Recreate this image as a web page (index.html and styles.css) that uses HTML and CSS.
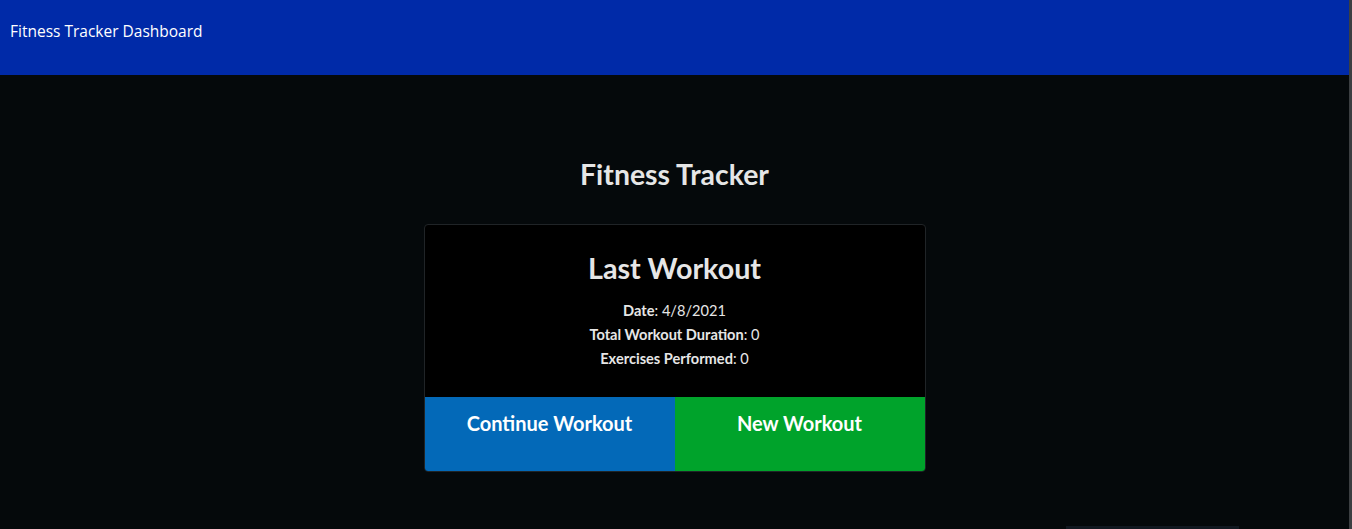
FILE: index.html
```html
<!DOCTYPE html>
<html>
<head>
<meta charset="utf-8">
<link rel="stylesheet" href="styles.css">
</head>
<body>
<div class="page">
  <header class="topbar"><span class="brand">Fitness Tracker Dashboard</span></header>
  <main class="main">
    <h2 class="title">Fitness Tracker</h2>
    <section class="card">
      <div class="card-body">
        <h3 class="card-title">Last Workout</h3>
        <p class="info"><b>Date</b>: 4/8/2021</p>
        <p class="info"><b>Total Workout Duration</b>: 0</p>
        <p class="info"><b>Exercises Performed</b>: 0</p>
      </div>
      <div class="actions">
        <a class="btn btn-continue">Continue Workout</a>
        <a class="btn btn-new">New Workout</a>
      </div>
    </section>
    <div class="bottom-row"><div class="stub"></div></div>
  </main>
</div>
</body>
</html>
```
FILE: styles.css
```css
html, body { margin: 0; padding: 0; }
body {
  background: #05090b;
  color: #e6e6e6;
  font-family: Lato, "Noto Sans", sans-serif;
  overflow: hidden;
}
.page {
  height: 529px;
  box-sizing: border-box;
  display: flex;
  flex-direction: column;
  border-right: 3px solid #3c3f42;
  width: 1352px;
}
.topbar {
  height: 75px;
  background: #002aa8;
  display: flex;
  align-items: flex-start;
  padding: 20px 10px 0;
  box-sizing: border-box;
}
.brand {
  font-family: "Open Sans", "Noto Sans", sans-serif;
  font-size: 15.5px;
  color: #ffffff;
  line-height: 22px;
}
.main {
  flex: 1;
  display: flex;
  flex-direction: column;
  align-items: center;
}
.title {
  margin: 82px 0 0;
  font-size: 28.4px;
  font-weight: 700;
  line-height: 34px;
  color: #e6e6e6;
}
.card {
  margin-top: 33px;
  width: 502px;
  border: 1px solid #202427;
  border-radius: 4px;
  overflow: hidden;
  background: #000;
  box-sizing: border-box;
}
.card-body {
  padding: 26px 0 26px;
  text-align: center;
}
.card-title {
  margin: 0 0 14px;
  font-size: 28.7px;
  font-weight: 700;
  line-height: 34px;
  color: #e6e6e6;
}
.info {
  margin: 0;
  font-size: 14.6px;
  line-height: 24px;
  color: #e6e6e6;
}
.info b { font-weight: 700; }
.actions {
  display: flex;
  height: 74px;
}
.btn {
  flex: 1;
  text-align: center;
  color: #fff;
  font-size: 20px;
  font-weight: 700;
  padding-top: 13px;
  line-height: 26px;
}
.btn-continue { background: #0369b8; }
.btn-new { background: #00a32b; }
.bottom-row {
  flex: 1;
  width: 100%;
  display: flex;
  align-items: flex-end;
}
.stub {
  margin-left: 1066px;
  width: 173px;
  height: 3px;
  background: #111820;
}
```
